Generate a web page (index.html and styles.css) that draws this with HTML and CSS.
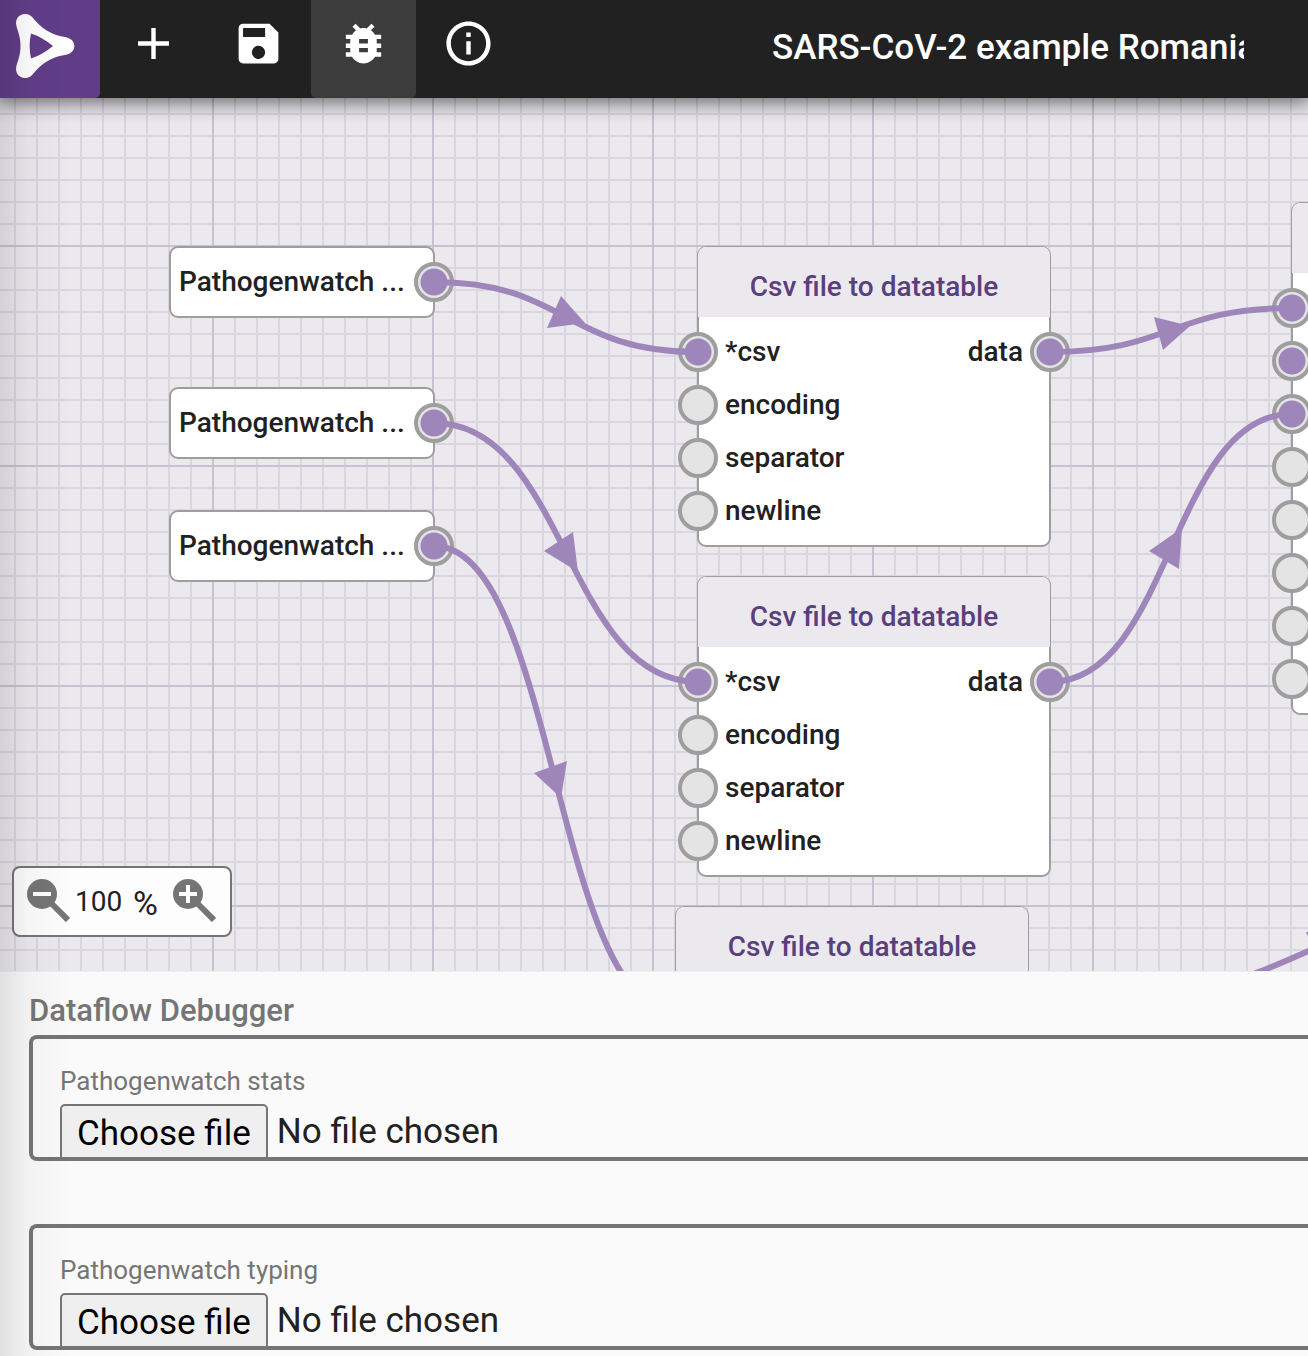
FILE: index.html
```html
<!DOCTYPE html>
<html lang="en">
<head>
<meta charset="utf-8">
<meta name="viewport" content="width=device-width, initial-scale=1">
<title>SARS-CoV-2 example Romania</title>
<link rel="stylesheet" href="styles.css">
</head>
<body>
<header class="toolbar">
  <a class="logo" href="#" aria-label="Home">
    <svg viewBox="0 0 100 98" width="100" height="98" aria-hidden="true">
      <path fill="#fff" fill-rule="evenodd" d="M25 14c3.400 0 6 1.400 8 4C41 28 50 34.500 65 37c5.500 1 9.300 4 9.300 9s-3.800 8-9.300 9C50 57.500 41 64 33 74c-2 2.600-4.600 4-8 4-6 0-10-5-8.700-11.500C18 60 20.500 55 20.500 46S18 32 16.300 25.500C15 19 19 14 25 14ZM31 33.500Q28.300 46 31 58.500Q42 55 53 46Q42 37 31 33.500Z"/>
    </svg>
  </a>
  <nav class="tools" aria-label="Tools">
    <button class="tool" type="button" aria-label="Add"><svg class="icon" viewBox="0 0 24 24"><path d="M19 13h-6v6h-2v-6H5v-2h6V5h2v6h6v2z"/></svg></button>
    <button class="tool" type="button" aria-label="Save"><svg class="icon" viewBox="0 0 24 24"><path d="M17 3H5c-1.110 0-2 .9-2 2v14c0 1.100.89 2 2 2h14c1.100 0 2-.9 2-2V7l-4-4zm-5 16c-1.660 0-3-1.340-3-3s1.340-3 3-3 3 1.340 3 3-1.340 3-3 3zm3-10H5V5h10v4z"/></svg></button>
    <button class="tool tool-active" type="button" aria-label="Debug" aria-pressed="true"><svg class="icon" viewBox="0 0 24 24"><path d="M20 8h-2.810c-.45-.78-1.070-1.450-1.820-1.960L17 4.410 15.590 3l-2.170 2.170C12.960 5.060 12.490 5 12 5c-.49 0-.96.06-1.410.17L8.410 3 7 4.410l1.620 1.630C7.880 6.550 7.260 7.220 6.810 8H4v2h2.090c-.05.33-.09.66-.09 1v1H4v2h2v1c0 .34.04.67.09 1H4v2h2.810c1.040 1.790 2.970 3 5.190 3s4.150-1.210 5.190-3H20v-2h-2.090c.05-.33.09-.66.09-1v-1h2v-2h-2v-1c0-.34-.04-.67-.09-1H20V8zm-6 8h-4v-2h4v2zm0-4h-4v-2h4v2z"/></svg></button>
    <button class="tool" type="button" aria-label="Information"><svg class="icon" viewBox="0 0 24 24"><path d="M11 7h2v2h-2zm0 4h2v6h-2zm1-9C6.480 2 2 6.480 2 12s4.480 10 10 10 10-4.480 10-10S17.520 2 12 2zm0 18c-4.410 0-8-3.590-8-8s3.590-8 8-8 8 3.590 8 8-3.590 8-8 8z"/></svg></button>
  </nav>
  <input class="doc-title" type="text" aria-label="Document name" value="SARS-CoV-2 example Romania">
</header>

<main class="canvas">
  <section class="node source n1"><span>Pathogenwatch ...</span><i class="port out on"></i></section>
  <section class="node source n2"><span>Pathogenwatch ...</span><i class="port out on"></i></section>
  <section class="node source n3"><span>Pathogenwatch ...</span><i class="port out on"></i></section>

  <section class="node step n4">
    <h2>Csv file to datatable</h2>
    <ul>
      <li><i class="port in on"></i><span>*csv</span><span>data</span><i class="port out on"></i></li>
      <li><i class="port in"></i><span>encoding</span></li>
      <li><i class="port in"></i><span>separator</span></li>
      <li><i class="port in"></i><span>newline</span></li>
    </ul>
  </section>
  <section class="node step n5">
    <h2>Csv file to datatable</h2>
    <ul>
      <li><i class="port in on"></i><span>*csv</span><span>data</span><i class="port out on"></i></li>
      <li><i class="port in"></i><span>encoding</span></li>
      <li><i class="port in"></i><span>separator</span></li>
      <li><i class="port in"></i><span>newline</span></li>
    </ul>
  </section>
  <section class="node step n6">
    <h2>Csv file to datatable</h2>
    <ul>
      <li><i class="port in on"></i></li>
    </ul>
  </section>
  <section class="node step n7">
    <h2></h2>
    <ul>
      <li><i class="port in on"></i></li>
      <li><i class="port in on"></i></li>
      <li><i class="port in on"></i></li>
      <li><i class="port in"></i></li>
      <li><i class="port in"></i></li>
      <li><i class="port in"></i></li>
      <li><i class="port in"></i></li>
      <li><i class="port in"></i></li>
    </ul>
  </section>

  <svg class="wires" aria-hidden="true">
    <g transform="translate(0 -98)">
      <g fill="none" stroke="#9e86ba" stroke-width="6">
        <path d="M434 282C566 282 566 352 698 352"/>
        <path d="M434 423C566 423 566 682 698 682"/>
        <path d="M434 546C555 546 555 1012 676 1012"/>
        <path d="M1050 352C1171 352 1171 308 1292 308"/>
        <path d="M1050 682C1171 682 1171 414 1292 414"/>
        <path d="M1028 1012C1314 1012 1314 885 1600 885"/>
      </g>
      <g fill="#9e86ba">
        <path d="M547 328L561 296L585 323Z"/>
        <path d="M544 551L573 532L578 572Z"/>
        <path d="M534 773L567 761L561 798Z"/>
        <path d="M1154 317L1163 350L1190 326Z"/>
        <path d="M1149 551L1179 569L1182 528Z"/>
        <path d="M1306 932L1320 964L1342 934Z"/>
      </g>
    </g>
  </svg>

  <div class="zoom">
    <button type="button" aria-label="Zoom out"><svg viewBox="0 0 44 44" width="44" height="44"><circle cx="16" cy="16" r="15"/><path class="handle" d="M26 26L42 42"/><path class="sign" d="M7 16h18"/></svg></button>
    <input type="text" aria-label="Zoom level" value="100"><span>%</span>
    <button type="button" aria-label="Zoom in"><svg viewBox="0 0 44 44" width="44" height="44"><circle cx="16" cy="16" r="15"/><path class="handle" d="M26 26L42 42"/><path class="sign" d="M7 16h18M16 7v18"/></svg></button>
  </div>
</main>

<section class="debugger">
  <h1>Dataflow Debugger</h1>
  <div class="entry">
    <label for="stats">Pathogenwatch stats</label>
    <div class="picker"><button type="button" data-for="stats">Choose file</button><span>No file chosen</span><input id="stats" type="file"></div>
  </div>
  <div class="entry">
    <label for="typing">Pathogenwatch typing</label>
    <div class="picker"><button type="button" data-for="typing">Choose file</button><span>No file chosen</span><input id="typing" type="file"></div>
  </div>
</section>
<script src="script.js"></script>
</body>
</html>
```
FILE: styles.css
```css
* { box-sizing: border-box; }

body {
  margin: 0;
  min-height: 100vh;
  display: flex;
  flex-direction: column;
  overflow-x: hidden;
  font-family: Roboto, "Liberation Sans", sans-serif;
  color: #212121;
  background: #fafafa;
}

body::after {
  content: "";
  position: absolute;
  top: 0;
  bottom: 0;
  left: 0;
  width: 72px;
  pointer-events: none;
  background: linear-gradient(to right, rgba(0, 0, 0, 0.1), rgba(0, 0, 0, 0.03) 40%, transparent);
  z-index: 5;
}

button, input { font: inherit; color: inherit; margin: 0; }

.toolbar {
  position: relative;
  z-index: 2;
  flex: none;
  display: flex;
  height: 98px;
  background: #212121;
  color: #fff;
  box-shadow: 0 0 20px 4px rgba(0, 0, 0, 0.6);
}

.logo {
  flex: none;
  width: 100px;
  background: #613d88;
  border-bottom-right-radius: 5px;
}
.logo svg { display: block; }

.tools { display: flex; margin-left: 1px; }

.tool {
  width: 105px;
  padding: 0 0 12px;
  border: 0;
  border-radius: 0 0 5px 5px;
  background: none;
  display: flex;
  align-items: center;
  justify-content: center;
}
.tool-active { background: #3c3c3c; }
.icon { width: 53px; height: 53px; fill: #fff; }

.doc-title {
  width: 472px;
  margin: 0 64px 4px auto;
  padding: 0;
  border: 0;
  outline: 0;
  background: none;
  font-size: 35px;
  font-weight: 500;
}

.canvas {
  position: relative;
  flex: 1 0 873px;
  overflow: hidden;
  background-color: #ebe9ee;
  background-image:
    linear-gradient(#c6c2d1 2px, transparent 2px),
    linear-gradient(to right, #c6c2d1 2px, transparent 2px),
    linear-gradient(#d9d6e0 2px, transparent 2px),
    linear-gradient(to right, #d9d6e0 2px, transparent 2px);
  background-size: 220px 220px, 220px 220px, 22px 22px, 22px 22px;
  background-position: 0 147px, 212px 0, 0 15px, 14px 0;
}

.node {
  position: absolute;
  background: #fff;
  border: 2px solid #9e9e9e;
  border-radius: 9px;
  font-size: 28px;
  font-weight: 500;
}
.n1 { left: 169px; top: 148px; }
.n2 { left: 169px; top: 289px; }
.n3 { left: 169px; top: 412px; }
.n4 { left: 697px; top: 148px; }
.n5 { left: 697px; top: 478px; }
.n6 { left: 675px; top: 808px; }
.n7 { left: 1291px; top: 104px; }

.source {
  width: 266px;
  height: 72px;
  display: flex;
  align-items: center;
  padding: 0 8px 1px;
}

.step { width: 354px; border-top-width: 1px; }
.step h2 {
  height: 70px;
  margin: 0 -1px;
  padding-top: 5px;
  border-radius: 8px 8px 0 0;
  background: #ebe9ee;
  color: #593f7b;
  font-size: 28px;
  font-weight: 500;
  line-height: 70px;
  text-align: center;
}
.step ul { margin: 0; padding: 8px 26px; list-style: none; }
.step li {
  position: relative;
  height: 53px;
  display: flex;
  align-items: center;
  justify-content: space-between;
}

.port {
  position: absolute;
  top: 50%;
  width: 40px;
  height: 40px;
  margin-top: -20px;
  border: 4px solid #9e9e9e;
  border-radius: 50%;
  background: #e4e4e4;
}
.port.on { background: radial-gradient(circle, #9e86ba 13px, #e4e4e4 14px); }
.port.in { left: -47px; }
.port.out { right: -47px; }
.source .port.out { right: -21px; }

.wires { position: absolute; left: 0; top: 0; width: 100%; height: 100%; pointer-events: none; }

.zoom {
  position: absolute;
  left: 12px;
  bottom: 34px;
  width: 220px;
  height: 71px;
  padding: 0 14px 4px 12px;
  display: flex;
  align-items: center;
  background: #fdfdfd;
  border: 2px solid #757575;
  border-radius: 8px;
  font-size: 28px;
}
.zoom button { padding: 0; border: 0; background: none; height: 44px; width: 44px; flex: none; }
.zoom svg { display: block; fill: #757575; }
.zoom .handle { stroke: #757575; stroke-width: 6; }
.zoom .sign { stroke: #fff; stroke-width: 4; }
.zoom input { width: 54px; padding: 4px 0 0 5px; border: 0; outline: 0; background: none; }
.zoom span { flex: 1; padding: 6px 0 0 9px; font-size: 34px; }

.debugger {
  flex: none;
  padding: 19px 0 6px 29px;
  border-top: 1px solid #eee;
}
.debugger h1 {
  margin: 0 0 5px;
  color: #757575;
  font-size: 31px;
  font-weight: 500;
  line-height: 39px;
}

.entry {
  height: 126px;
  padding: 26px 0 0 27px;
  border: 4px solid #757575;
  border-right: 0;
  border-radius: 8px 0 0 8px;
  overflow: hidden;
}
.entry + .entry { margin-top: 63px; }
.entry label {
  display: block;
  color: #757575;
  font-size: 26px;
  line-height: 32px;
}

.picker {
  display: flex;
  gap: 9px;
  margin-top: 7px;
  font-size: 35px;
  line-height: 56px;
}
.picker button {
  flex: none;
  padding: 0 15px;
  border: 2px solid #757575;
  border-radius: 5px;
  background: #efefef;
  color: #000;
}
.picker input { display: none; }
```
FILE: script.js
```js
document.querySelectorAll('.picker button').forEach(function (button) {
  var input = document.getElementById(button.dataset.for);
  button.addEventListener('click', function () { input.click(); });
  input.addEventListener('change', function () {
    button.nextElementSibling.textContent = input.files.length ? input.files[0].name : 'No file chosen';
  });
});
```
